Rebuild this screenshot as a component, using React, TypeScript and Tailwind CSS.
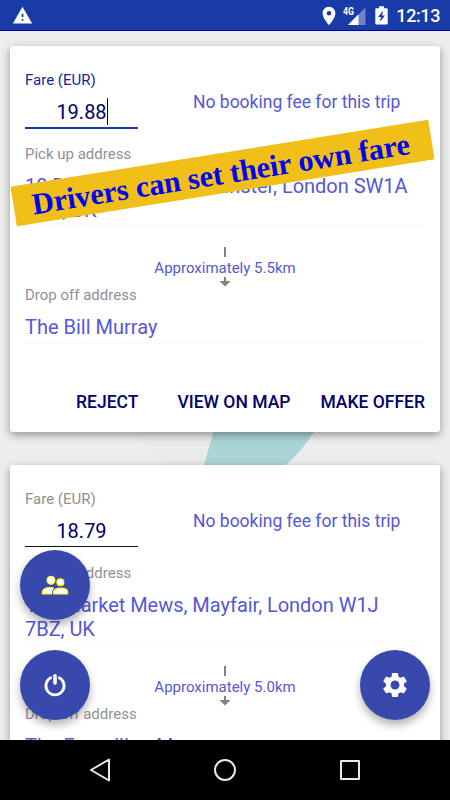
import { ReactNode } from 'react'
import { MdSettings, MdWarning, MdLocationOn } from 'react-icons/md'

interface Trip {
  fare: string
  pickUp: string[]
  distance: string
  dropOff: string
  focused?: boolean
}

const trips: Trip[] = [
  {
    fare: '19.88',
    pickUp: ['10 Downing St, Westminster, London SW1A', '2AA, UK'],
    distance: '5.5km',
    dropOff: 'The Bill Murray',
    focused: true,
  },
  {
    fare: '18.79',
    pickUp: ['17a Market Mews, Mayfair, London W1J', '7BZ, UK'],
    distance: '5.0km',
    dropOff: 'The Foundling Museum',
  },
]

function StatusBar() {
  return (
    <header className="relative z-10 flex h-[31px] shrink-0 items-center border-b border-[#0000a0] bg-[#183ba8] pl-3 pr-[10px] pt-px text-white">
      <MdWarning className="h-[21px] w-[21px]" />
      <div className="ml-auto flex items-center">
        <MdLocationOn className="h-[22px] w-[22px]" />
        <svg viewBox="0 0 24 20" className="ml-[3px] mr-px h-5 w-6">
          <path d="M5 19L22.500 1.500V19Z" fill="#6d84c8" />
          <path d="M5 19L15.500 8.200V19Z" fill="#fff" />
          <text x="0" y="9.300" fontFamily="Roboto" fontSize="10" fontWeight="700" fill="#fff" textLength="11" lengthAdjust="spacingAndGlyphs">4G</text>
        </svg>
        <svg viewBox="0 0 13 19" className="mb-px ml-[7px] h-[19px] w-[13px]">
          <path d="M1.300 2.200H4V0.300H9V2.200H11.700Q12.700 2.200 12.700 3.200V17.500Q12.700 18.500 11.700 18.500H1.300Q0.300 18.500 0.300 17.500V3.200Q0.300 2.200 1.300 2.200Z" fill="#fff" />
          <path d="M8.300 4.500L3 11H6L4.800 16L10 9.500H7Z" fill="#183ba8" />
        </svg>
        <span className="ml-[8px] mt-px text-[18px] font-medium leading-none tracking-[-0.4px]">12:13</span>
      </div>
    </header>
  )
}

function TripCard({ trip }: { trip: Trip }) {
  return (
    <article className="h-[386px] shrink-0 rounded-[3px] bg-white px-[15px] pt-[26px] shadow-[0_3px_8px_rgba(0,0,0,0.38)]">
      <div className="flex h-[57px] items-start">
        <div className="w-[113px]">
          <p className={`text-[15px] leading-[17px] ${trip.focused ? 'text-[#1a1f9c]' : 'text-[#919191]'}`}>Fare (EUR)</p>
          <div className={`flex items-center justify-center pt-[7px] text-[20px] text-[#00006c] ${trip.focused ? 'h-[40px] border-b-[2px] border-[#183ba8]' : 'h-[39px] border-b border-[#111]'}`}>
            {trip.fare}
            {trip.focused && <span className="-mr-[1.5px] h-[27px] w-[1.5px] bg-[#00006c]" />}
          </div>
        </div>
        <p className="ml-[55px] mt-[18px] whitespace-nowrap text-[17.500px] leading-6 text-[#5458d6]">No booking fee for this trip</p>
      </div>
      <p className="mt-[16px] text-[15px] leading-[18px] text-[#919191]">Pick up address</p>
      <div className="mt-[12px] border-b-[1.5px] border-[#f7f7f7] pb-[3px] text-[20px] leading-[23.5px] tracking-[-0.03px] text-[#5458d6]">
        {trip.pickUp.map((line) => (
          <p key={line} className="whitespace-nowrap">{line}</p>
        ))}
      </div>
      <div className="mt-[21px] flex flex-col items-center">
        <span className="h-[10px] w-[2px] bg-[#808080]" />
        <p className="mt-[2px] text-[15px] leading-[18px] text-[#5458d6]">Approximately {trip.distance}</p>
        <svg viewBox="0 0 12 10" className="h-[10px] w-3" fill="#808080">
          <path d="M5 0H7V4H11.500L6 9.500L0.500 4H5Z" />
        </svg>
      </div>
      <p className="-mt-px text-[15px] leading-[18px] text-[#919191]">Drop off address</p>
      <p className="mt-[11px] border-b-[1.5px] border-[#f7f7f7] pb-[4px] text-[20px] leading-[24px] text-[#5458d6]">{trip.dropOff}</p>
      <div className="mt-[46px] flex justify-end gap-[30px] text-[17.500px] font-medium leading-6 text-[#00006c]">
        <button className="mr-[9px]">REJECT</button>
        <button>VIEW ON MAP</button>
        <button>MAKE OFFER</button>
      </div>
    </article>
  )
}

function Fab({ label, className, children }: { label: string; className: string; children: ReactNode }) {
  return (
    <button
      aria-label={label}
      className={`absolute flex h-[70px] w-[70px] items-center justify-center rounded-full bg-[#3848ac] text-white shadow-[0_5px_9px_rgba(0,0,0,0.3)] ${className}`}
    >
      {children}
    </button>
  )
}

export default function App() {
  return (
    <div className="flex h-[800px] w-[450px] flex-col overflow-hidden bg-[#ededed] font-['Roboto',sans-serif]">
      <StatusBar />
      <main className="relative min-h-0 flex-1 overflow-hidden">
        {/* Backdrop logo behind the cards */}
        <svg viewBox="0 0 450 709" className="absolute inset-0 h-full w-full">
          <path d="M137 401Q147 419 163 434H204L214 401Z" fill="#eaeaea" />
          <path d="M214 399H315Q304 418 286 434H204Z" fill="#aad4d6" />
        </svg>
        <div className="relative flex flex-col gap-[33px] px-2.5 pt-[15px]">
          {trips.map((trip) => (
            <TripCard key={trip.fare} trip={trip} />
          ))}
        </div>

        <div className="absolute left-[10.500px] top-[122px] flex h-[39.500px] w-[423px] -rotate-[9.1deg] items-center justify-center whitespace-nowrap bg-[#f0bf18] pr-[4px] pt-[3px] font-['Liberation_Serif',serif] text-[30.200px] font-bold text-[#0000f0]">
          Drivers can set their own fare
        </div>

        <Fab label="Passengers" className="left-5 top-[519px]">
          <svg viewBox="0 0 28 22" className="h-[22px] w-7" fill="#fff" stroke="#ffff00" strokeWidth="1.1">
            <circle cx="19.400" cy="8.300" r="3.500" />
            <path d="M1.300 20V18C1.300 12 16 12 16 18V20Z" />
            <circle cx="10" cy="6.200" r="4" />
            <path d="M12.500 20V18C12.500 12.800 26.700 12.800 26.700 18V20Z" stroke="#3848ac" strokeWidth="2.800" />
            <path d="M12.500 20V18C12.500 12.800 26.700 12.800 26.700 18V20Z" />
          </svg>
        </Fab>
        <Fab label="Power" className="left-5 top-[619px]">
          <svg viewBox="0 0 24 24" className="h-6 w-6" fill="none" stroke="#fff">
            <path d="M8.700 4.300A9.100 9.100 0 1 0 15.300 4.300" strokeWidth="2.800" />
            <path d="M12 2.800V10" strokeWidth="3.600" strokeLinecap="round" />
          </svg>
        </Fab>
        <Fab label="Settings" className="right-5 top-[619px]">
          <MdSettings className="h-[30px] w-[30px]" />
        </Fab>
      </main>
      <nav className="relative flex h-[60px] shrink-0 items-center justify-between bg-black px-[87px]">
        <svg viewBox="0 0 26 26" className="h-[26px] w-[26px]" fill="none" stroke="#e8e8e8" strokeWidth="2" strokeLinejoin="round">
          <path d="M4 13L22 2.500V23.500Z" />
        </svg>
        <svg viewBox="0 0 26 26" className="h-[26px] w-[26px]" fill="none" stroke="#e8e8e8" strokeWidth="2">
          <circle cx="13" cy="13" r="10" />
        </svg>
        <svg viewBox="0 0 26 26" className="h-[26px] w-[26px]" fill="none" stroke="#e8e8e8" strokeWidth="2" strokeLinejoin="round">
          <rect x="4" y="4" width="18" height="18" />
        </svg>
      </nav>
    </div>
  )
}
